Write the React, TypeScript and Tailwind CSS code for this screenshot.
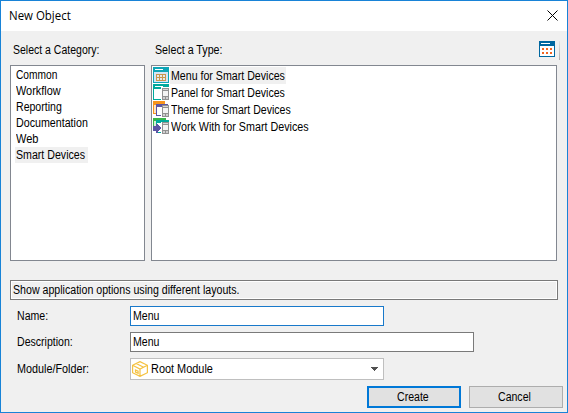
import type { ReactNode } from "react";

const categories = [
  { name: "Common", cls: "scale-x-[0.85]" },
  { name: "Workflow", cls: "scale-x-[0.91]" },
  { name: "Reporting", cls: "scale-x-[0.88]" },
  { name: "Documentation", cls: "scale-x-[0.89]" },
  { name: "Web", cls: "scale-x-[0.92]" },
  { name: "Smart Devices", cls: "scale-x-[0.885]" },
];

function Text({ children, cls = "scale-x-[0.88]" }: { children: ReactNode; cls?: string }) {
  return <span className={`inline-block origin-left ${cls}`}>{children}</span>;
}

function Icon({ children }: { children: ReactNode }) {
  return (
    <svg width="16" height="16" viewBox="0 0 16 16" shapeRendering="crispEdges" className="block shrink-0">
      {children}
    </svg>
  );
}

function Phone() {
  return (
    <g>
      <path d="M8 3h8v13H8z" fill="#fff" />
      <path d="M9 4h7v12H9z" fill="#919191" />
      <path d="M10 7h5v5h-5z" fill="#f4f4f4" />
      <path d="M10 5h5v1h-5z" fill="#d8d8d8" />
      <path d="M10 13h2v2h-2zM13 13h2v2h-2z" fill="#d0d0d0" />
    </g>
  );
}

function MenuIcon() {
  return (
    <Icon>
      <path d="M0 0h16v16H0z" fill="#0ea5b7" />
      <path d="M1 5h14v10H1z" fill="#d3e5f5" />
      <path d="M2 2h8v1H2z" fill="#fff" />
      <path d="M3 7h10v7H3z" fill="#c9964f" />
      <path d="M4 8h2v2H4zM7 8h2v2H7zM10 8h2v2h-2zM4 11h2v2H4zM7 11h2v2H7zM10 11h2v2h-2z" fill="#e4ebef" />
    </Icon>
  );
}

function PanelIcon() {
  return (
    <Icon>
      <path d="M0 0h16v16H0z" fill="#00a99d" />
      <path d="M1 5h14v10H1z" fill="#fff" />
      <path d="M2 2h8v1H2z" fill="#fff" />
      <Phone />
    </Icon>
  );
}

function ThemeIcon() {
  return (
    <Icon>
      <path d="M0 0h12v13H0z" fill="#f7941d" />
      <path d="M1 4h11v8H1z" fill="#fde3c4" />
      <path d="M3 3h12v12H3z" fill="#5b55a5" />
      <path d="M4 6h10v8H4z" fill="#fff" />
      <path d="M9 3h7v1H9z" fill="#5b55a5" />
      <Phone />
      <path d="M8 3h7v1H8zM8 4h1v2H8z" fill="#5b55a5" />
    </Icon>
  );
}

function WorkWithIcon() {
  return (
    <Icon>
      <path d="M0 0h13v13H0z" fill="#39b54a" />
      <path d="M1 3h11v9H1z" fill="#d2efd6" />
      <path d="M3 2h13v13H3z" fill="#00a99d" />
      <path d="M4 5h11v9H4z" fill="#fff" />
      <Phone />
      <path d="M8 3h8v1H8z" fill="#00a99d" />
      <path d="M0 8h3V6h2v1h1v1h1v1h1v2H7v1H6v1H5v2H3v-2H0z" fill="#5b55a5" />
    </Icon>
  );
}

const types = [
  { name: "Menu for Smart Devices", icon: <MenuIcon />, cls: "scale-x-[0.885]" },
  { name: "Panel for Smart Devices", icon: <PanelIcon />, cls: "scale-x-[0.88]" },
  { name: "Theme for Smart Devices", icon: <ThemeIcon />, cls: "scale-x-[0.88]" },
  { name: "Work With for Smart Devices", icon: <WorkWithIcon />, cls: "scale-x-[0.895]" },
];

function CalendarIcon() {
  return (
    <Icon>
      <path d="M0 0h16v16H0z" fill="#0067a0" />
      <path d="M1 5h14v10H1z" fill="#fff" />
      <path d="M2 2h9v1H2z" fill="#fff" />
      <path d="M3 7h2v2H3zM7 7h2v2H7zM11 7h2v2h-2zM3 11h2v2H3zM7 11h2v2H7zM11 11h2v2h-2z" fill="#f26522" />
    </Icon>
  );
}

function BoxIcon() {
  return (
    <svg width="16" height="16" viewBox="0 0 16 16" className="shrink-0" fill="none" stroke="#f5c242" strokeWidth="1.2">
      <path d="M.6 4.3 8 .6l7.4 3.7v7.4L8 15.4.6 11.7zM.6 4.3 8 8l7.4-3.7M8 8v7.4M4.2 2.5l7.4 3.7M3.5 9l2.6 1.2v2l-2.6-1.2z" />
    </svg>
  );
}

export default function App() {
  return (
    <div className="flex h-[413px] w-[568px] flex-col overflow-hidden border border-[#1883d7] bg-[#f0f0f0] font-['Liberation_Sans',sans-serif] text-[12px] leading-4 whitespace-nowrap text-black">
      <header className="flex h-[30px] shrink-0 items-center justify-between bg-white pr-[9px] pl-2 font-['Open_Sans',sans-serif] text-[12px]">
        <Text cls="scale-x-[0.955]">New Object</Text>
        <svg width="11" height="11" viewBox="0 0 11 11" stroke="#000" fill="none" className="mb-px">
          <path d="m.5.5 10 10m0-10-10 10" />
        </svg>
      </header>

      <div className="flex h-[34px] shrink-0 pl-3">
        <span className="w-[142px] pt-[11px]"><Text cls="scale-x-[0.875]">Select a Category:</Text></span>
        <span className="flex-1 pt-[11px]"><Text cls="scale-x-[0.89]">Select a Type:</Text></span>
        <div className="flex gap-1 pt-[10px] pr-[7px]">
          <CalendarIcon />
          <div className="h-[19px] w-px bg-linear-to-b from-[#e4e4e4] to-[#b0b0b0]" />
        </div>
      </div>

      <div className="flex h-[196px] shrink-0 gap-1.5 pl-[9px]">
        <ul className="w-[135px] border border-[#828790] bg-white pt-px pl-1">
          {categories.map((c) => (
            <li key={c.name} className="flex h-4">
              <span className={`pl-[1.4px] ${c.name === "Smart Devices" ? "w-[73px] bg-[#f0f0f0]" : ""}`}><Text cls={c.cls}>{c.name}</Text></span>
            </li>
          ))}
        </ul>
        <ul className="w-[406px] border border-[#828790] bg-white pt-px pl-px">
          {types.map((t, i) => (
            <li key={t.name} className="flex h-[17px] items-start">
              {t.icon}
              <span className={`ml-px h-[17px] pt-px pl-px ${i === 0 ? "w-[116px] bg-[#f0f0f0]" : ""}`}><Text cls={t.cls}>{t.name}</Text></span>
            </li>
          ))}
        </ul>
      </div>

      <div className="mt-[19px] ml-[9px] flex h-5 w-[548px] shrink-0 items-center border border-[#7a7a7a] pl-0.5 shadow-[inset_0_0_0_1px_#fff]">
        <Text cls="scale-x-[0.885]">Show application options using different layouts.</Text>
      </div>

      <form className="flex flex-col pl-4">
        <div className="mt-1.5 flex h-5">
          <label className="w-[113px] pt-0.5"><Text>Name:</Text></label>
          <div className="flex w-[254px] items-center border border-[#1979ca] bg-white pl-0.5"><Text>Menu</Text></div>
        </div>
        <div className="mt-1.5 flex h-5">
          <label className="w-[113px] pt-0.5"><Text>Description:</Text></label>
          <div className="flex w-[344px] items-center border border-[#7a7a7a] bg-white pl-0.5"><Text>Menu</Text></div>
        </div>
        <div className="mt-1.5 flex h-[22px]">
          <label className="w-[113px] pt-[3px]"><Text cls="scale-x-[0.9]">Module/Folder:</Text></label>
          <div className="flex w-[254px] items-center border border-[#bfbfbf] bg-white pr-[5px] pl-px">
            <BoxIcon />
            <span className="ml-[3px] flex-1"><Text cls="scale-x-[0.91]">Root Module</Text></span>
            <svg width="7" height="4" viewBox="0 0 7 4" fill="#505050" shapeRendering="crispEdges">
              <path d="M0 0h7v1H6v1H5v1H4v1H3V3H2V2H1V1H0z" />
            </svg>
          </div>
        </div>
      </form>

      <footer className="mt-1.5 flex h-[22px] shrink-0 justify-end gap-2 pr-1">
        <button className="flex w-[94px] items-center border-2 border-[#0078d7] bg-[#e1e1e1] pl-7"><Text>Create</Text></button>
        <button className="flex w-[94px] items-center border border-[#adadad] bg-[#e1e1e1] pl-7"><Text>Cancel</Text></button>
      </footer>
    </div>
  );
}
